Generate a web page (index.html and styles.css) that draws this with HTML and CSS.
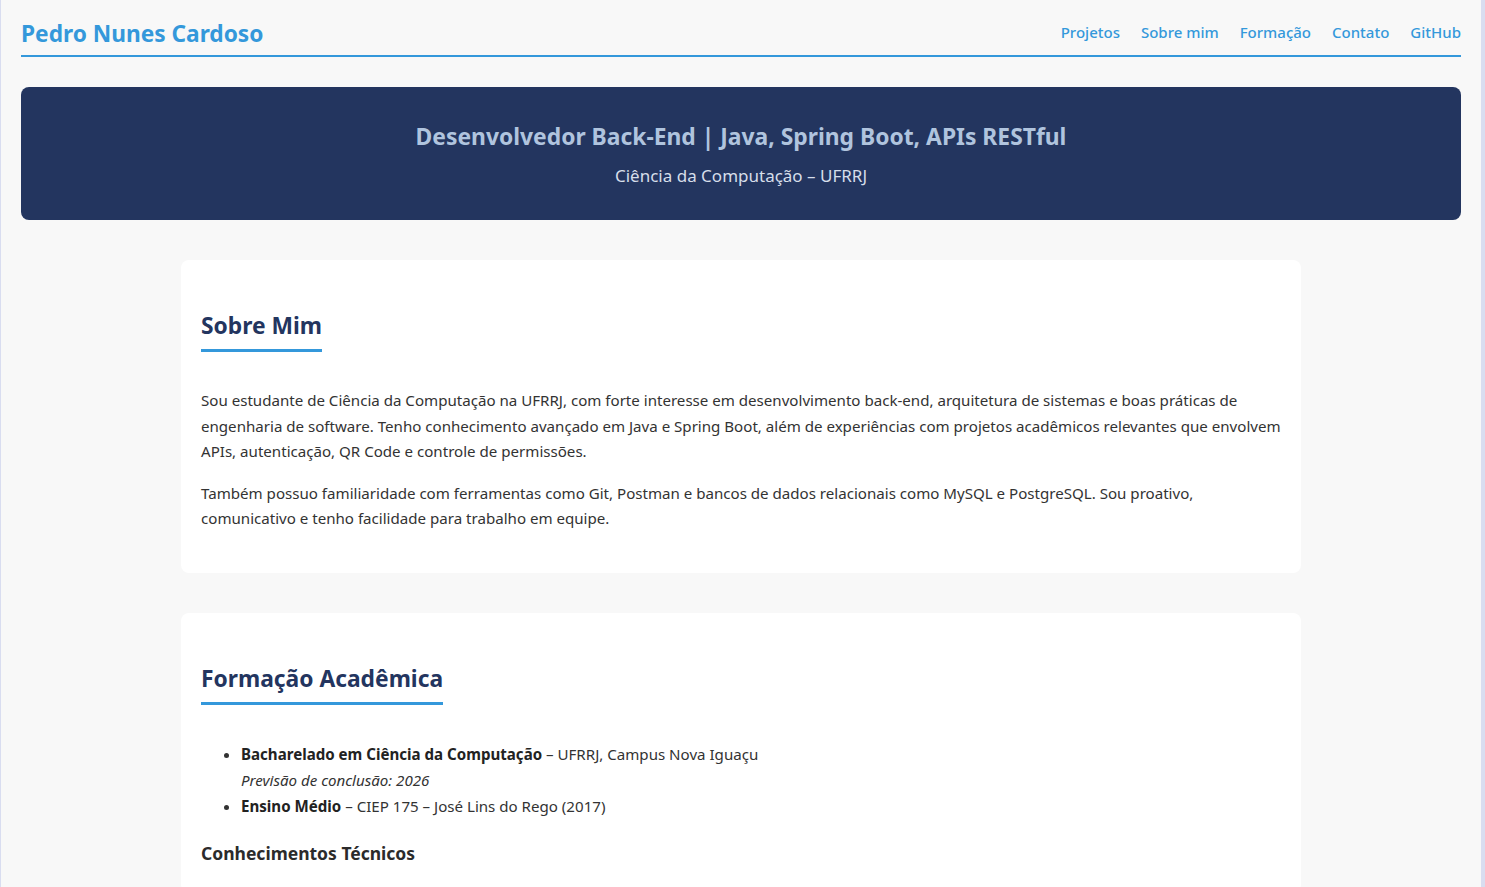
FILE: index.html
```html
<!DOCTYPE html>
<html lang="pt-BR">
<head>
<meta charset="utf-8">
<title>Pedro Nunes Cardoso</title>
<link rel="stylesheet" href="styles.css">
</head>
<body>
<div class="page">
  <header class="site-header">
    <h1 class="brand">Pedro Nunes Cardoso</h1>
    <nav class="nav">
      <a href="#projetos">Projetos</a>
      <a href="#sobre">Sobre mim</a>
      <a href="#formacao">Formação</a>
      <a href="#contato">Contato</a>
      <a href="#github">GitHub</a>
    </nav>
  </header>

  <section class="hero">
    <h2 class="hero-title">Desenvolvedor Back-End | Java, Spring Boot, APIs RESTful</h2>
    <p class="hero-sub">Ciência da Computação – UFRRJ</p>
  </section>

  <main class="content">
    <section class="card" id="sobre">
      <h2 class="section-title">Sobre Mim</h2>
      <p>Sou estudante de Ciência da Computação na UFRRJ, com forte interesse em desenvolvimento back-end, arquitetura de sistemas e boas práticas de engenharia de software. Tenho conhecimento avançado em Java e Spring Boot, além de experiências com projetos acadêmicos relevantes que envolvem APIs, autenticação, QR Code e controle de permissões.</p>
      <p>Também possuo familiaridade com ferramentas como Git, Postman e bancos de dados relacionais como MySQL e PostgreSQL. Sou proativo, comunicativo e tenho facilidade para trabalho em equipe.</p>
    </section>

    <section class="card" id="formacao">
      <h2 class="section-title">Formação Acadêmica</h2>
      <ul class="edu-list">
        <li><strong>Bacharelado em Ciência da Computação</strong> – UFRRJ, Campus Nova Iguaçu<br><em>Previsão de conclusão: 2026</em></li>
        <li><strong>Ensino Médio</strong> – CIEP 175 – José Lins do Rego (2017)</li>
      </ul>
      <h3 class="sub-title">Conhecimentos Técnicos</h3>
    </section>
  </main>
</div>
</body>
</html>
```

FILE: styles.css
```css
html {
  background: #d9ddf0;
}
body {
  margin: 0 4px 0 1px;
  font-family: "Noto Sans", "Open Sans", sans-serif;
  font-size: 15.1px;
  line-height: 25.6px;
  color: #333;
  background: #f8f8f8;
  min-height: 887px;
}
.page {
  padding: 0 20px;
}
.site-header {
  display: flex;
  justify-content: space-between;
  align-items: center;
  padding: 18px 0 5px;
  border-bottom: 2px solid #3498db;
}
.brand {
  margin: 0;
  font-size: 22.7px;
  line-height: 32px;
  font-weight: 700;
  color: #3498db;
}
.nav {
  display: flex;
  gap: 21px;
  padding-bottom: 2px;
}
.nav a {
  color: #3498db;
  text-decoration: none;
  font-weight: 500;
  font-size: 15px;
}
.hero {
  margin-top: 30px;
  background: #23355f;
  border-radius: 8px;
  padding: 34px 20px 30px;
  text-align: center;
}
.hero-title {
  margin: 0 0 9px;
  font-size: 22.85px;
  line-height: 32px;
  font-weight: 700;
  color: #b0c4de;
}
.hero-sub {
  margin: 0;
  font-size: 17px;
  line-height: 28px;
  color: #d6deea;
}
.content {
  max-width: 1120px;
  margin: 40px auto 0;
}
.card {
  background: #fff;
  border-radius: 8px;
  padding: 30px 20px 25px;
  margin-bottom: 40px;
}
.section-title {
  display: table;
  margin: 20px 0 36px;
  padding-bottom: 7px;
  font-size: 22.8px;
  line-height: 32px;
  font-weight: 700;
  color: #23355f;
  border-bottom: 3px solid #3498db;
}
.card p {
  margin: 0 0 16px;
}
.edu-list {
  margin: 0 0 16px;
  padding-left: 40px;
}
.edu-list li {
  line-height: 26px;
}
.edu-list strong {
  color: #222;
}
.sub-title {
  margin: 18.72px 0 0;
  font-size: 17.5px;
  line-height: 30px;
  font-weight: 700;
  color: #2b2b2b;
}
```
